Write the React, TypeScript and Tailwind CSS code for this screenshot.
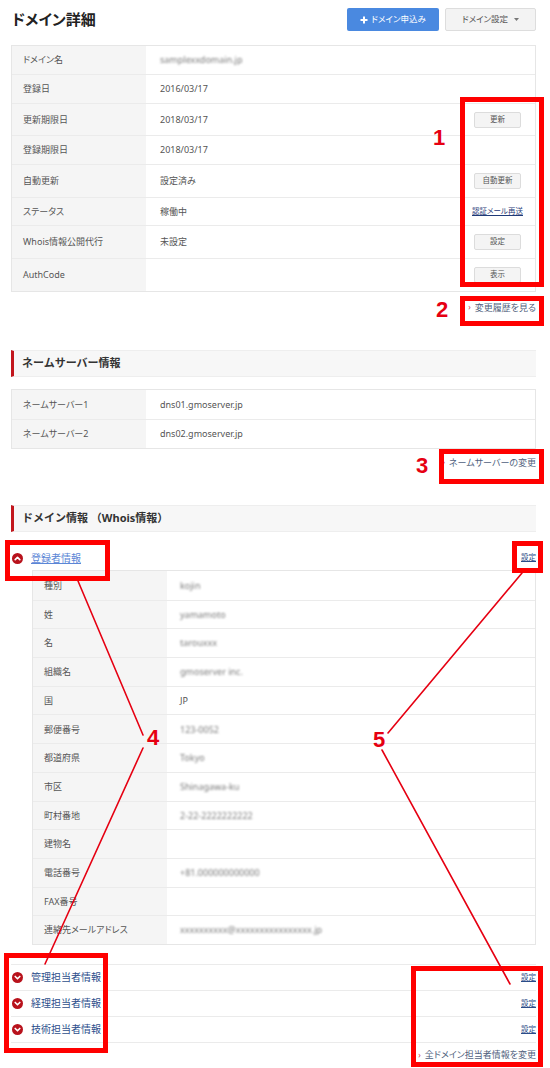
import React from 'react';

type Row = {
  label: string;
  value?: React.ReactNode;
  action?: React.ReactNode;
  h: string;
};

const Btn = ({ children }: { children: React.ReactNode }) => (
  <span className="flex h-[16px] w-[47px] items-center justify-center rounded-[2px] border border-[#dcdcdc] bg-[#f4f4f4] text-[7.5px] text-[#555]">
    {children}
  </span>
);

const Blur = ({ children }: { children: React.ReactNode }) => (
  <span className="text-[#7a7a7a] blur-[1px]">{children}</span>
);

const Toggle = ({ open }: { open?: boolean }) => (
  <svg width="11" height="11" viewBox="0 0 12 12" className="shrink-0">
    <circle cx="6" cy="6" r="6" fill="#b8121c" />
    <path
      d={open ? 'M3.5 7.3 6 4.8l2.5 2.5' : 'M3.5 4.9 6 7.4l2.5-2.5'}
      stroke="#fff"
      strokeWidth="1.8"
      fill="none"
      strokeLinecap="round"
      strokeLinejoin="round"
    />
  </svg>
);

const MoreLink = ({ children }: { children: React.ReactNode }) => (
  <div className="flex h-[12px] items-center justify-end">
    <span className="mr-[4px] text-[8px] leading-none text-[#d0343c]">›</span>
    <span className="text-[9px] leading-none text-[#4f5f7d]">{children}</span>
  </div>
);

const SectionTitle = ({ children }: { children: React.ReactNode }) => (
  <div className="flex h-[27px] items-center border-y border-[#eeeeee] border-l-[3px] border-l-[#c2161d] bg-[#f7f7f7] pl-[8px] text-[11px] font-bold text-[#333] [font-feature-settings:normal]">
    {children}
  </div>
);

const domainRows: Row[] = [
  { label: 'ドメイン名', value: <Blur>samplexxdomain.jp</Blur>, h: 'h-[28px]' },
  { label: '登録日', value: '2016/03/17', h: 'h-[29px]' },
  { label: '更新期限日', value: '2018/03/17', action: <Btn>更新</Btn>, h: 'h-[32px]' },
  { label: '登録期限日', value: '2018/03/17', h: 'h-[29px]' },
  { label: '自動更新', value: '設定済み', action: <Btn>自動更新</Btn>, h: 'h-[33px]' },
  {
    label: 'ステータス',
    value: '稼働中',
    action: <span className="text-[7.5px] text-[#1f3a78] underline">認証メール再送</span>,
    h: 'h-[28px]',
  },
  { label: 'Whois情報公開代行', value: '未設定', action: <Btn>設定</Btn>, h: 'h-[33px]' },
  { label: 'AuthCode', action: <Btn>表示</Btn>, h: 'h-[33px]' },
];

const registrant: { label: string; value?: React.ReactNode }[] = [
  { label: '種別', value: <Blur>kojin</Blur> },
  { label: '姓', value: <Blur>yamamoto</Blur> },
  { label: '名', value: <Blur>tarouxxx</Blur> },
  { label: '組織名', value: <Blur>gmoserver inc.</Blur> },
  { label: '国', value: 'JP' },
  { label: '郵便番号', value: <Blur>123-0052</Blur> },
  { label: '都道府県', value: <Blur>Tokyo</Blur> },
  { label: '市区', value: <Blur>Shinagawa-ku</Blur> },
  { label: '町村番地', value: <Blur>2-22-2222222222</Blur> },
  { label: '建物名' },
  { label: '電話番号', value: <Blur>+81.000000000000</Blur> },
  { label: 'FAX番号' },
  { label: '連絡先メールアドレス', value: <Blur>xxxxxxxxxx@xxxxxxxxxxxxxxxx.jp</Blur> },
];

const contacts = ['管理担当者情報', '経理担当者情報', '技術担当者情報'];

const App: React.FC = () => {
  return (
    <div className="relative h-[1068px] w-[550px] overflow-hidden bg-white font-['Noto_Sans','Noto_Sans_CJK_JP',sans-serif] text-[#555] [font-feature-settings:'palt']">
      {/* header */}
      <div className="flex h-[31px] items-end justify-between pl-[12px] pr-[14px]">
        <h1 className="mb-[1px] text-[15px] font-bold leading-[22px] text-[#222]">ドメイン詳細</h1>
        <div className="flex gap-[6px]">
          <button className="flex h-[23px] w-[92px] items-center justify-center gap-[3px] rounded-[2px] bg-[#4a89e0] text-[8.5px] text-white">
            <svg width="8" height="8" viewBox="0 0 8 8">
              <path d="M4 0.5v7M0.5 4h7" stroke="#fff" strokeWidth="2" />
            </svg>
            ドメイン申込み
          </button>
          <button className="flex h-[23px] w-[91px] items-center justify-center gap-[6px] rounded-[2px] border border-[#dddddd] bg-[#f3f3f3] text-[8.5px] text-[#555]">
            ドメイン設定
            <svg width="5" height="3" viewBox="0 0 5 3">
              <path d="M0 0h5L2.5 3z" fill="#777" />
            </svg>
          </button>
        </div>
      </div>

      <div className="pl-[11px] pr-[14px]">
        {/* domain table */}
        <div className="mt-[14px] border border-[#e6e6e6] text-[9px]">
          {domainRows.map((r, i) => (
            <div key={r.label} className={`flex ${r.h} ${i > 0 ? 'border-t border-[#ebebeb]' : ''}`}>
              <div className="flex w-[134px] items-center bg-[#f5f5f5] pl-[11px]">{r.label}</div>
              <div className="flex flex-1 items-center pl-[14px]">{r.value}</div>
              <div className="flex w-[75px] items-center justify-center">{r.action}</div>
            </div>
          ))}
        </div>
        <div className="mt-[9px]">
          <MoreLink>変更履歴を見る</MoreLink>
        </div>

        {/* name servers */}
        <div className="mt-[37px]">
          <SectionTitle>ネームサーバー情報</SectionTitle>
        </div>
        <div className="mt-[12px] border border-[#e6e6e6] text-[9px]">
          <div className="flex h-[29px]">
            <div className="flex w-[134px] items-center bg-[#f5f5f5] pl-[11px]">ネームサーバー1</div>
            <div className="flex flex-1 items-center pl-[14px]">dns01.gmoserver.jp</div>
          </div>
          <div className="flex h-[29px] border-t border-[#ebebeb]">
            <div className="flex w-[134px] items-center bg-[#f5f5f5] pl-[11px]">ネームサーバー2</div>
            <div className="flex flex-1 items-center pl-[14px]">dns02.gmoserver.jp</div>
          </div>
        </div>
        <div className="mt-[7px]">
          <MoreLink>ネームサーバーの変更</MoreLink>
        </div>

        {/* whois */}
        <div className="mt-[37px]">
          <SectionTitle>ドメイン情報 （Whois情報）</SectionTitle>
        </div>
        <div className="mt-[16px] flex h-[20px] items-center pl-[1px]">
          <Toggle open />
          <span className="ml-[8px] text-[10px] text-[#5b86d6] underline">登録者情報</span>
          <span className="ml-auto text-[7.5px] text-[#2b4c88] underline">設定</span>
        </div>
        <div className="ml-[21px] mt-[2px] border border-[#e6e6e6] text-[9px]">
          {registrant.map((r, i) => (
            <div key={r.label} className={`flex h-[28.7px] ${i > 0 ? 'border-t border-[#ebebeb]' : ''}`}>
              <div className="flex w-[134px] items-center bg-[#f5f5f5] pl-[11px]">{r.label}</div>
              <div className="flex flex-1 items-center pl-[13px]">{r.value}</div>
            </div>
          ))}
        </div>

        <div className="mt-[19px] border-b border-[#ebebeb]">
          {contacts.map((c) => (
            <div key={c} className="flex h-[26px] items-center border-t border-[#ebebeb] pl-[1px]">
              <Toggle />
              <span className="ml-[8px] text-[10px] text-[#2d4f8c]">{c}</span>
              <span className="ml-auto text-[7.5px] text-[#2b4c88] underline">設定</span>
            </div>
          ))}
        </div>
        <div className="mt-[6px]">
          <MoreLink>全ドメイン担当者情報を変更</MoreLink>
        </div>
      </div>

      {/* annotations */}
      <div className="pointer-events-none absolute inset-0">
        <div className="absolute left-[460px] top-[97px] h-[190px] w-[84px] border-[5px] border-[#ff0000]" />
        <div className="absolute left-[460px] top-[296px] h-[30px] w-[84px] border-[5px] border-[#ff0000]" />
        <div className="absolute left-[439px] top-[449px] h-[35px] w-[105px] border-[5px] border-[#ff0000]" />
        <div className="absolute left-[5px] top-[540px] h-[41px] w-[105px] border-[5px] border-[#ff0000]" />
        <div className="absolute left-[512px] top-[541px] h-[32px] w-[31px] border-[5px] border-[#ff0000]" />
        <div className="absolute left-[4px] top-[953px] h-[100px] w-[104px] border-[5px] border-[#ff0000]" />
        <div className="absolute left-[411px] top-[966px] h-[101px] w-[132px] border-[5px] border-[#ff0000]" />

        <span className="absolute left-[433px] top-[127px] font-['Liberation_Sans',sans-serif] text-[22px] font-bold leading-none text-[#e60012]">1</span>
        <span className="absolute left-[436px] top-[299px] font-['Liberation_Sans',sans-serif] text-[22px] font-bold leading-none text-[#e60012]">2</span>
        <span className="absolute left-[416px] top-[455px] font-['Liberation_Sans',sans-serif] text-[22px] font-bold leading-none text-[#e60012]">3</span>
        <span className="absolute left-[147px] top-[727px] font-['Liberation_Sans',sans-serif] text-[22px] font-bold leading-none text-[#e60012]">4</span>
        <span className="absolute left-[373px] top-[729px] font-['Liberation_Sans',sans-serif] text-[22px] font-bold leading-none text-[#e60012]">5</span>

        <svg className="absolute inset-0" width="550" height="1068">
          <g stroke="#e60012" strokeWidth="1.6" strokeLinecap="round">
            <line x1="78" y1="581" x2="143" y2="735" />
            <line x1="143" y1="748" x2="45" y2="964" />
            <line x1="522" y1="573" x2="388" y2="733" />
            <line x1="382" y1="750" x2="510" y2="984" />
          </g>
        </svg>
      </div>
    </div>
  );
};

export default App;
